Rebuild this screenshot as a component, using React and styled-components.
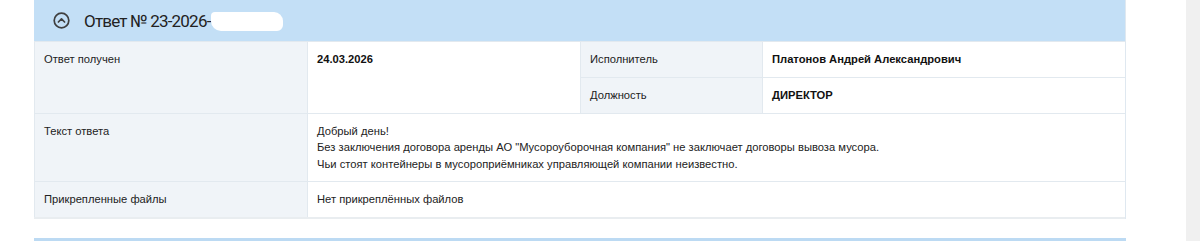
import React from 'react';
import styled, { createGlobalStyle } from 'styled-components';

const GlobalStyle = createGlobalStyle`
  html, body { margin: 0; padding: 0; background: #fff; }
  body { font-family: "Liberation Sans", Arial, sans-serif; color: #222; }
`;

const Page = styled.div`
  display: flex;
  height: 241px;
  overflow: hidden;
`;

const Main = styled.main`
  flex: 1;
  padding: 0 60px 0 34px;
  display: flex;
  flex-direction: column;
  gap: 19px;
`;

const Strip = styled.aside`
  width: 14px;
  background: #f0f0f0;
`;

const Panel = styled.section`
  border-right: 1px solid #dfe8f0;
  background: #fff;
`;

const PanelHeader = styled.header`
  height: 41px;
  background: #c3dff6;
  display: flex;
  align-items: center;
  padding-left: 19px;
  gap: 14px;
`;

const Title = styled.h3`
  margin: 0;
  font-family: "Roboto", sans-serif;
  font-weight: 400;
  font-size: 17px;
  letter-spacing: -0.8px;
  color: #222;
  display: flex;
  align-items: center;
`;

const Redacted = styled.span`
  display: inline-block;
  width: 72px;
  height: 19px;
  background: #fff;
  border-radius: 4px 9px 6px 10px;
  margin-left: 0;
  transform: translateY(1px);
`;

const Table = styled.div`
  display: grid;
  grid-template-columns: 273px 273px 182px 1fr;
  border-bottom: 2px solid #e9edf0;
  font-size: 11.2px;
`;

const Cell = styled.div`
  padding: 9px 9px;
  line-height: 16.5px;
  background: ${p => (p.$label ? '#f0f4f8' : '#fff')};
  font-weight: ${p => (p.$bold ? 700 : 400)};
  color: ${p => (p.$bold ? '#111' : '#222')};
  border-top: 1px solid #e2e9ef;
  border-left: 1px solid #e2e9ef;
  grid-column: ${p => p.$span || 'auto'};
  grid-row: ${p => p.$rows || 'auto'};
  min-height: ${p => p.$h || 'auto'};
  box-sizing: border-box;
`;

const NextPanel = styled.section`
  height: 40px;
  border: 1px solid #bcdaf3;
  border-top-width: 2px;
  background: #fff;
`;

const ToggleIcon = () => (
  <svg width="17" height="17" viewBox="0 0 17 17">
    <circle cx="8.5" cy="8.5" r="7.3" fill="none" stroke="#3f3f3f" strokeWidth="1.7" />
    <path d="M5.4 10 L8.5 6.9 L11.6 10" fill="none" stroke="#3f3f3f" strokeWidth="1.7" strokeLinecap="round" strokeLinejoin="round" />
  </svg>
);

const App = () => (
  <>
    <GlobalStyle />
    <Page>
      <Main>
        <Panel>
          <PanelHeader>
            <ToggleIcon />
            <Title>Ответ № 23-2026-<Redacted /></Title>
          </PanelHeader>
          <Table>
            <Cell $label $rows="span 2">Ответ получен</Cell>
            <Cell $bold $rows="span 2">24.03.2026</Cell>
            <Cell $label $h="36px">Исполнитель</Cell>
            <Cell $bold $h="36px">Платонов Андрей Александрович</Cell>
            <Cell $label $h="35px">Должность</Cell>
            <Cell $bold $h="35px">ДИРЕКТОР</Cell>
            <Cell $label $h="68px">Текст ответа</Cell>
            <Cell $span="span 3" $h="68px">
              Добрый день!<br />
              Без заключения договора аренды АО "Мусороуборочная компания" не заключает договоры вывоза мусора.<br />
              Чьи стоят контейнеры в мусороприёмниках управляющей компании неизвестно.
            </Cell>
            <Cell $label $h="36px">Прикрепленные файлы</Cell>
            <Cell $span="span 3" $h="36px">Нет прикреплённых файлов</Cell>
          </Table>
        </Panel>
        <NextPanel />
      </Main>
      <Strip />
    </Page>
  </>
);

export default App;
